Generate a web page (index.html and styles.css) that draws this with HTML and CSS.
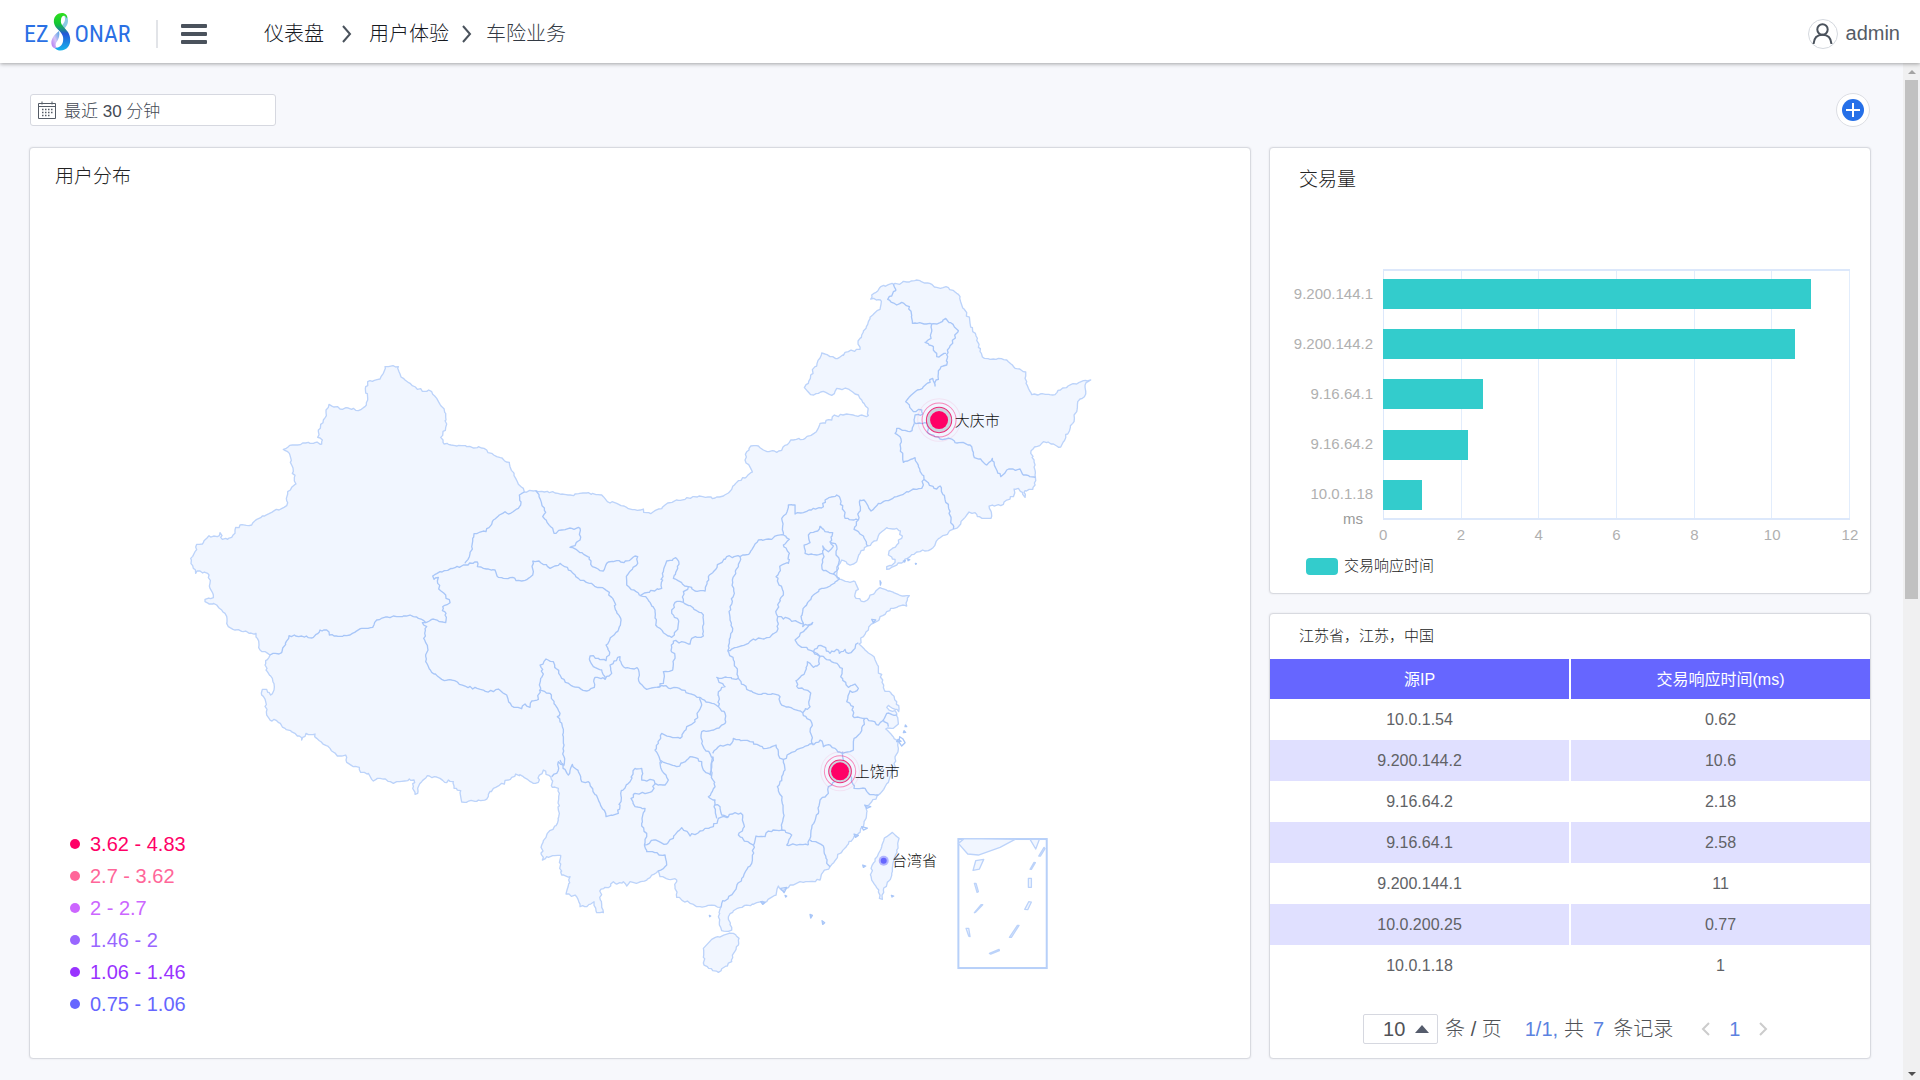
FILE: index.html
```html
<!DOCTYPE html>
<html lang="zh-CN">
<head>
<meta charset="utf-8">
<title>EZSonar</title>
<link rel="stylesheet" href="styles.css">
</head>
<body>
<header class="topbar">
  <a class="logo" href="#" aria-label="EZSonar">
    <span>EZ</span>
    <svg class="logo-mark" viewBox="0 0 22 38" aria-hidden="true">
      <defs>
        <linearGradient id="lg1" x1="0" y1="0" x2="0" y2="1">
          <stop offset="0" stop-color="#2fe01c"/><stop offset=".3" stop-color="#12c436"/>
          <stop offset=".55" stop-color="#2458d8"/><stop offset="1" stop-color="#16b4ec"/>
        </linearGradient>
        <linearGradient id="lg2" x1="0" y1="1" x2="1" y2="0">
          <stop offset="0" stop-color="#b06cf0"/><stop offset=".5" stop-color="#d6c4f8"/><stop offset="1" stop-color="#4aa0e0"/>
        </linearGradient>
      </defs>
      <path d="M2 33C0 27 3 23 9 18C10 22 9 26 6 30C5 33 6 35 9 36C5 36 3 35 2 33Z" fill="url(#lg2)"/>
      <path d="M17 3C19 8 18 12 14 16L11 13C15 10 16 6 14 2Z" fill="#8ccbe4"/>
      <path d="M17 6C18 2 15 0 12 0C7 0 3 4 4 10C5 16 12 18 13 24C14 30 11 35 5 35C8 39 15 38 18 34C21 30 21 24 18 19C15 15 10 12 11 7C11 4 13 2 15 3C16 4 17 5 17 6Z" fill="url(#lg1)"/>
    </svg>
    <span>ONAR</span>
  </a>
  <span class="divider"></span>
  <button class="menu" type="button" aria-label="菜单"><span></span><span></span><span></span></button>
  <nav class="crumbs">
    <a href="#">仪表盘</a>
    <svg viewBox="0 0 10 18" aria-hidden="true"><path d="M1 1l7 8-7 8"/></svg>
    <a href="#">用户体验</a>
    <svg viewBox="0 0 10 18" aria-hidden="true"><path d="M1 1l7 8-7 8"/></svg>
    <span>车险业务</span>
  </nav>
  <button class="user" type="button">
    <svg viewBox="0 0 30 30" aria-hidden="true"><circle cx="15" cy="15" r="14.5" fill="#fff" stroke="#d4d8de"/><g fill="none" stroke="#4a525c" stroke-width="2"><circle cx="14.500" cy="10.500" r="5.200"/><path d="M5.500 25C6 19 9.500 15.800 14.500 15.800S23 19 23.500 25"/></g></svg>
    <span>admin</span>
  </button>
</header>
<div class="view">
  <main class="content">
    <div class="toolbar">
      <label class="range">
        <svg viewBox="0 0 18 18" aria-hidden="true"><g fill="none" stroke="#555c66"><path d="M.5 2.500h17v15H.500zM.5 5.500h17M4 .500v3M14 .500v3"/><path d="M4 8.500h11M4 11.500h11M4 14.500h8" stroke-width="1.500" stroke-dasharray="1.500 1.500"/></g></svg>
        <input type="text" value="最近 30 分钟" aria-label="时间范围">
      </label>
      <button class="add" type="button" aria-label="添加"><svg viewBox="0 0 22 22" aria-hidden="true"><circle cx="11" cy="11" r="11" fill="#2670e8"/><path d="M11 4v14M4 11h14" stroke="#fff" stroke-width="2"/></svg></button>
    </div>
    <div class="board">
      <section class="card map-card">
        <svg class="map" id="map" viewBox="-450 -366 3660 2730" role="img" aria-label="用户分布"></svg>
        <h2>用户分布</h2>
        <ul class="ranges">
          <li class="c1">3.62 - 4.83</li>
          <li class="c2">2.7 - 3.62</li>
          <li class="c3">2 - 2.7</li>
          <li class="c4">1.46 - 2</li>
          <li class="c5">1.06 - 1.46</li>
          <li class="c6">0.75 - 1.06</li>
        </ul>
      </section>
      <div class="side">
        <section class="card chart-card">
          <h2>交易量</h2>
          <div class="chart">
            <ul class="names"><li>9.200.144.1</li><li>9.200.144.2</li><li>9.16.64.1</li><li>9.16.64.2</li><li>10.0.1.18</li></ul>
            <div class="plot">
              <div class="grid"><i></i><i></i><i></i><i></i><i></i><i></i></div>
              <div class="bars">
                <div class="row"><b style="width:91.700%"></b></div>
                <div class="row"><b style="width:88.300%"></b></div>
                <div class="row"><b style="width:21.500%"></b></div>
                <div class="row"><b style="width:18.200%"></b></div>
                <div class="row"><b style="width:8.300%"></b></div>
              </div>
            </div>
            <span class="unit">ms</span>
            <ul class="ticks"><li>0</li><li>2</li><li>4</li><li>6</li><li>8</li><li>10</li><li>12</li></ul>
          </div>
          <p class="key"><i></i>交易响应时间</p>
        </section>
        <section class="card table-card">
          <h3>江苏省，江苏，中国</h3>
          <table>
            <thead><tr><th>源IP</th><th>交易响应时间(ms)</th></tr></thead>
            <tbody>
              <tr><td>10.0.1.54</td><td>0.62</td></tr>
              <tr><td>9.200.144.2</td><td>10.6</td></tr>
              <tr><td>9.16.64.2</td><td>2.18</td></tr>
              <tr><td>9.16.64.1</td><td>2.58</td></tr>
              <tr><td>9.200.144.1</td><td>11</td></tr>
              <tr><td>10.0.200.25</td><td>0.77</td></tr>
              <tr><td>10.0.1.18</td><td>1</td></tr>
            </tbody>
          </table>
          <div class="pager">
            <label class="size"><select aria-label="每页条数"><option>10</option></select><svg viewBox="0 0 14 8" aria-hidden="true"><path d="M0 8L7 0l7 8z" fill="#555c6c"/></svg></label>
            <span class="per">条 / 页</span>
            <span class="num">1/1,</span><span class="total">共</span><span class="num count">7</span><span>条记录</span>
            <button class="prev" type="button" aria-label="上一页"><svg viewBox="0 0 9 14" aria-hidden="true"><path d="M8 1L2 7l6 6"/></svg></button>
            <a class="num" href="#">1</a>
            <button class="next" type="button" aria-label="下一页"><svg viewBox="0 0 9 14" aria-hidden="true"><path d="M1 1l6 6-6 6"/></svg></button>
          </div>
        </section>
      </div>
    </div>
  </main>
  <div class="scroll" aria-hidden="true">
    <svg viewBox="0 0 8 4"><path d="M0 4L4 0l4 4z" fill="#a3a3a3"/></svg>
    <div class="thumb"></div>
    <svg class="down" viewBox="0 0 8 4"><path d="M0 0l4 4 4-4z" fill="#505050"/></svg>
  </div>
</div>
<script src="map.js"></script>
</body>
</html>
```
FILE: styles.css
```css
* { box-sizing: border-box; }
body { margin: 0; min-height: 100vh; display: flex; flex-direction: column; background: #f7f8fc; color: #222; font-family: "Liberation Sans", "Noto Sans CJK SC", sans-serif; font-size: 20px; }
h2, h3, ul, p { margin: 0; padding: 0; font-weight: 300; list-style: none; }
button { border: 0; background: none; padding: 0; font: inherit; color: inherit; }
a { color: inherit; text-decoration: none; }
svg { display: block; }

.topbar { position: relative; z-index: 1; display: flex; align-items: center; height: 63px; padding: 4px 20px 0 24px; background: #fff; box-shadow: 0 1px 4px rgba(0, 0, 0, .35); }
.logo { display: flex; align-items: center; gap: 2px; width: 109px; color: #2a70e4; font-family: "Roboto Condensed", Roboto, sans-serif; font-size: 24px; }
.logo-mark { width: 22px; height: 38px; flex: none; margin-top: -4px; }
.divider { width: 2px; height: 28px; margin-left: 23px; background: #e2e4e8; }
.menu { display: grid; gap: 4px; width: 26px; margin-left: 23px; }
.menu span { height: 4px; border-radius: 1px; background: #4a525c; }
.crumbs { display: flex; align-items: center; margin-left: 57px; color: #16191f; font-weight: 300; line-height: 28px; }
.crumbs svg { width: 10px; height: 18px; margin: 0 17px 0 18px; fill: none; stroke: #4a525c; stroke-width: 2; }
.crumbs svg:last-of-type { margin: 0 14px 0 13px; }
.crumbs span { color: #333a44; }
.user { display: flex; align-items: center; gap: 8px; margin-left: auto; color: #555c66; }
.user svg { width: 30px; height: 30px; }

.view { flex: 1; display: flex; }
.content { flex: 1; min-width: 0; padding: 30px 32px 21px 29px; }
.toolbar { display: flex; align-items: center; justify-content: space-between; margin-bottom: 20px; padding: 0 1px; }
.range { display: flex; align-items: center; width: 246px; height: 32px; padding: 0 7px; gap: 8px; border: 1px solid #d6d8e0; border-radius: 3px; background: #fff; }
.range svg { width: 18px; height: 18px; flex: none; }
.range input { min-width: 0; width: 100%; height: 28px; padding: 0 0 2px; border: 0; background: none; color: #444a54; font-family: inherit; font-size: 17px; font-weight: 300; }
.add { display: grid; place-items: center; width: 34px; height: 34px; border: 1px solid #dcdee4; border-radius: 50%; background: #fff; }
.add svg { width: 22px; height: 22px; }

.board { display: grid; grid-template-columns: minmax(0, 67fr) minmax(0, 33fr); gap: 18px; }
.card { border: 1px solid #d8dae0; border-radius: 4px; background: #fff; box-shadow: 0 0 2px rgba(0, 0, 0, .1); }
.card h2 { font-size: 19px; line-height: 28px; }
.map-card { display: grid; }
.map-card > * { grid-area: 1 / 1; }
.map-card h2 { align-self: start; padding: 15px 25px; }
.map { width: 100%; height: auto; }
.land { fill: #f1f6ff; stroke: #bcd3fa; stroke-width: 4; stroke-linejoin: round; }
.border { fill: none; stroke: #a8c6f8; stroke-width: 4; stroke-linejoin: round; }
.frame { fill: none; stroke: #b7d0f9; stroke-width: 6; }
.place { fill: #111; font-size: 45px; font-weight: 300; }
.ranges { align-self: end; justify-self: start; padding: 0 40px 38px; line-height: 32px; }
.ranges li { display: flex; align-items: center; gap: 10px; }
.ranges li::before { content: ""; width: 10px; height: 10px; border-radius: 50%; background: currentColor; }
.c1 { color: #ff0066; } .c2 { color: #ff6699; } .c3 { color: #cc66ff; }
.c4 { color: #9966ff; } .c5 { color: #9933ff; } .c6 { color: #6666ff; }

.side { display: flex; flex-direction: column; gap: 19px; }
.chart-card { height: 447px; }
.chart-card h2 { padding: 18px 29px 0; }
.chart { display: grid; grid-template-columns: 113px minmax(0, 1fr); margin: 75px 20px 0 0; color: #b0b0b0; font-size: 15px; }
.names { padding-right: 10px; text-align: right; line-height: 50px; }
.plot { display: grid; height: 251px; }
.plot > * { grid-area: 1 / 1; }
.grid { display: grid; grid-template-columns: repeat(6, 1fr); border: solid #dce8fb; border-width: 2px 0 2px 1px; }
.grid i { border-right: 1px solid #e2edfc; }
.bars { display: grid; grid-template-rows: repeat(5, 1fr); align-items: center; }
.row b { display: block; height: 30px; background: #33cccc; }
.unit { margin-top: -10px; padding-right: 20px; text-align: right; line-height: 18px; color: #999; }
.ticks { display: flex; justify-content: space-between; padding-top: 5px; line-height: 20px; }
.ticks li { display: flex; justify-content: center; width: 0; }
.key { display: flex; align-items: center; gap: 6px; margin-top: 9px; padding-left: 36px; font-size: 15px; line-height: 24px; }
.key i { width: 32px; height: 17px; border-radius: 4px; background: #33cccc; }

.table-card { flex: 1; }
.table-card h3 { padding: 0 29px 1px; font-size: 15px; line-height: 44px; }
table { width: 100%; table-layout: fixed; border-collapse: collapse; font-size: 16px; text-align: center; }
th { height: 40px; padding: 0 0 3px; background: #6666ff; color: #fff; font-weight: 400; }
td { height: 41px; padding: 0; color: #606266; }
th + th, td + td { border-left: 2px solid #fff; }
tbody tr:nth-child(even) { background: #e0e0ff; }
.pager { display: flex; align-items: center; padding: 28px 0 0 93px; color: #505256; font-weight: 300; line-height: 30px; white-space: nowrap; }
.size { display: flex; align-items: center; width: 75px; height: 30px; padding: 0 8px 0 19px; border: 1px solid #d6d8e0; border-radius: 2px; }
.size select { flex: 1; min-width: 0; padding: 0; border: 0; background: none; appearance: none; color: inherit; font-family: inherit; font-size: 20px; }
.size svg { width: 14px; height: 8px; }
.per { margin: 0 23px 0 7px; }
.total { margin-left: 6px; }
.num { color: #5b82e0; }
.count { margin: 0 9px; }
.pager button { width: 9px; }
.pager button svg { width: 9px; height: 14px; fill: none; stroke: #ccc; stroke-width: 2; }
.prev { margin: 0 19px 0 28px; }
.next { margin-left: 19px; }

.scroll { display: flex; flex-direction: column; align-items: center; width: 17px; padding: 7px 0 4px; background: #f0f0f1; }
.scroll svg { width: 8px; height: 4px; }
.scroll .down { margin-top: auto; }
.thumb { width: 13px; height: 519px; margin-top: 6px; background: #c1c1c1; }
```
FILE: map.js
```js
// Map data: every part is [x origin, y origin, points]. Three units make one CSS pixel.
const A = [0, 240], B = [210, 990], C = [960, 510], D = [960, 1290], E = [1680, 0], F = [1680, 750], G = [1860, 1410];

const outline = [
  [C, "73,155 107,152 165,159 210,165 265,158 310,170 322,185 350,190 385,206 412,211 430,207 431,217 452,221 475,207 520,185 560,173 592,171 645,174 685,159 715,122 735,114 757,96 735,60 740,35 752,18 775,18 790,30 830,37 862,14 872,0"],
  [E, "190,508 222,490 240,460 275,450 277,440 320,432 345,437 385,436 384,415 365,390 345,372 325,357 290,355 275,376 250,364 212,374 193,353 205,340 212,315 245,249 270,260 292,266 325,245 360,238 354,222 365,195 385,155 398,135 420,118 421,90 392,87 395,75 422,50 445,44 460,43 500,36 540,32 575,43 590,52 625,53 645,66 660,80 665,105 680,128 690,160 698,185 712,205 720,245 733,265 775,265 805,275 825,295 857,306 855,325 865,355 875,374 900,372 945,374 968,354 1010,342 1030,332 1052,330 1035,345 1037,372 1013,395 1003,445 965,525 962,531 910,515 873,542 885,585 886,622 878,658 855,662 855,682 835,655 822,657 820,680 800,690 782,707 747,708 755,738 745,745 712,740 705,728 687,726 680,735 655,770 640,777 615,795 590,812 572,838 540,845 510,860 470,885 440,898 440,890 462,880 465,868 445,855 447,843 470,825 487,798 470,775 440,773 425,785 410,812 382,828 360,850 350,875 330,885 305,870 300,880"],
  [F, "290,150 290,162 298,178 330,187 345,185 355,208 345,222 348,235 370,245 382,240 390,225 405,217 420,203 450,213 478,225 508,227 502,240 500,258 488,255 470,262 440,275 420,290 417,300 398,310 385,330 370,350 357,372 375,390 402,410 415,450 428,480 432,508 452,518 470,545 476,575 445,556 440,562 470,580 475,612 460,625 437,627 455,645 470,660 475,685 465,715 465,745 450,770 435,800 415,825"],
  [D, "1115,305 1098,325 1098,355 1090,380 1075,400 1060,415 1045,432 1020,460 990,500 970,515 960,540 925,545 900,545 870,555 850,572 835,558 828,585 800,605 770,608 740,615 700,632 685,650 695,690 685,694 665,692 655,650 662,622 635,615 600,620 570,610 530,592 525,560 530,540 480,530 474,513 455,525 440,540 415,548 390,545 380,558 370,545 350,552 340,545 325,563 303,567 301,600 310,638 290,638 282,605 260,620 240,620 230,590 198,582 210,530 185,525 180,480 182,466 140,470 127,480 125,435 140,405 172,370 178,340 175,265 157,262 152,230"],
  [B, "880,510 868,525 865,547 850,550 820,530 797,522 775,540 730,565 710,597 680,604 635,606 632,572 612,565 610,545 595,540 590,548 570,535 532,527 515,545 505,560 503,580 495,583 490,560 492,540 478,537 430,550 400,537 390,535 370,543 355,520 332,517 328,502 310,500 290,487 287,465 262,468 240,445 200,415 195,402 168,400 155,420 148,408 105,385 80,362 60,360 50,345 47,305 35,285 37,268 50,268 62,285 72,270 67,235 48,210 47,182 60,165"],
  [A, "240,900 228,850 190,845 145,830 135,790 110,765 75,755 75,748 100,743 90,715 87,675 60,663 47,670 40,655 32,625 45,605 50,583 70,578 87,557 112,560 120,548 127,568 155,562 165,540 180,525 215,525 232,507 275,487 320,467 323,425 335,412 348,402 335,345 328,310 310,298 325,290 385,277 405,278 425,282 427,270 413,262 415,240 430,210 447,163 480,177 520,175 535,182 555,170 563,150 557,110 570,92 600,87 610,70 615,50 655,50 657,65 670,85 690,100 712,118 755,125 770,145 797,190 797,232 782,262 792,282 830,288 905,294 950,320 988,337 990,350 1012,395 1030,415 1033,426"]
];

const islands = [
  [D, "635,718 665,708 700,700 717,715 715,735 697,765 695,785 655,817 612,795 610,745"],
  [G, "277,277 297,295 290,330 275,400 250,450 247,478 238,475 236,450 215,420 213,385 245,320 260,290"]
];

const borders = [
  [A, "1033,426 1018,435 1022,465 1015,475 985,492 975,485 940,510 918,545 882,551 875,590 868,620 855,640"],
  [A, "738,818 755,808 797,818 798,790 787,782 788,770 810,758 797,735 776,717 775,682 762,688 758,678 780,665 855,645 892,636 892,650 925,657 945,660 955,682 990,683 1025,693 1045,685 1060,665 1058,632"],
  [A, "738,818 715,805 690,795 640,798 590,810 578,832 545,835 500,857 448,855 440,840 420,840 400,862 385,863 365,858 327,857 305,908 270,915"],
  [B, "528,68 517,68 530,80 521,115 533,145 527,185 545,217 575,238 605,240 645,258 700,270 730,275 745,267 770,285 785,318 800,322 815,326 825,312 840,322 845,303 865,298 868,270"],
  [B, "868,270 900,280 930,340 922,350 937,380 942,470 942,495 925,485 920,520 905,530"],
  [C, "98,363 122,368 150,385 180,370 205,390 235,415 270,430 320,452 343,485 350,515 363,540 355,570 335,590 318,615 328,645 318,662 270,648 268,657 280,680 305,690 315,718"],
  [C, "107,152 137,217 128,230 158,265 162,280 185,270 215,265 240,265 240,300 210,322 240,338 268,352 272,373 310,393 320,370 350,362 372,368 405,348 413,350 413,370 382,405 380,435 418,466"],
  [C, "418,466 485,445 487,400 500,363 527,353 537,372 520,415 565,440 550,455 550,487 525,487 515,520 535,540 533,568 515,592 490,578 467,555 465,510 437,470 418,466"],
  [C, "550,487 590,512 610,525 610,588 575,595 570,612 520,603 513,632 525,650 518,690 490,695 490,730 470,742"],
  [C, "565,440 585,453 615,453 625,410 660,370 680,350 720,350"],
  [C, "720,350 715,380 697,420 703,460 690,500 690,540 697,575 683,632"],
  [C, "720,350 750,338 775,300 805,297 850,285"],
  [C, "850,285 868,298 850,315 868,340 865,370 845,375 828,410 850,455 827,515 833,530"],
  [C, "833,530 830,575 800,593 760,597 745,610 690,632 683,632"],
  [C, "850,285 845,235 858,222 865,195 885,195 885,222 910,218 940,205 970,200 975,180 1010,165 1020,175 1035,235 1075,240"],
  [C, "1075,240 1062,268 1090,288 1102,318"],
  [C, "960,258 975,275 998,278 990,305 1000,318 985,335 968,318 968,340 950,345 915,340 912,315 930,308 925,285 945,275 960,258"],
  [C, "990,305 1010,318 1008,345 1018,360 1015,385 1000,402 970,392 965,375 972,350 968,340"],
  [C, "1000,402 1018,415 990,438 965,445 935,470 908,515 905,540 910,550"],
  [C, "833,530 870,538 910,550 908,560 938,547 885,600 895,615 940,635"],
  [C, "940,635 955,617 970,620 990,640 1010,628 1018,640 1035,628 1045,640 1060,630 1075,608"],
  [C, "940,635 960,650 958,672 940,682 922,665 915,695 888,722 895,745 928,755 930,800 908,818"],
  [C, "940,635 990,660 1027,685 1022,710 1045,742 1065,732 1075,745 1065,755 1050,752 1040,785 1060,800 1058,828 1095,835"],
  [C, "1095,835 1135,855 1160,820 1190,825"],
  [C, "1150,840 1165,860"],
  [C, "1095,835 1080,880 1060,905 1060,930 1028,940 1010,930 990,915 970,920 960,900 940,915"],
  [C, "683,632 700,660 712,695 715,715 740,748 775,763 835,765 845,795 895,812 908,818 935,848 930,875 940,915"],
  [C, "715,715 650,712 675,740 655,755 655,800"],
  [C, "600,772 655,800 675,820 675,850 650,865 605,875 605,910 640,955"],
  [C, "470,742 490,738 545,750 600,772"],
  [C, "470,742 440,748 420,730 415,688 370,680 360,650 330,675 335,700 315,718 285,712 283,742 260,753 220,740 185,715 160,665 138,657 120,675 130,702 118,735 120,752"],
  [C, "600,772 605,795 585,845 560,860 540,895 510,890 485,880 475,910 465,930 480,960 485,970"],
  [D, "480,180 500,190 530,200 560,180 570,170 605,185 610,210 632,225 638,170"],
  [D, "638,160 655,140 690,135 700,115 750,125 800,145 828,135 835,165 850,178 870,160 900,145 940,130"],
  [D, "850,178 855,210 832,260 845,300 850,340 845,390"],
  [D, "638,170 635,225 645,260 625,290 645,300 642,320 650,355"],
  [D, "480,185 485,210 505,240 495,255 465,250"],
  [D, "180,180 205,225 217,193 235,215 245,245 265,245 300,310 318,350 355,340 362,280 390,245 405,205 425,205 425,240 460,240 465,252 455,275 400,283 393,295 405,320 435,325 425,370 440,410 433,435"],
  [D, "433,435 460,420 500,432 545,383 570,408 600,393 640,380 655,355 685,350"],
  [D, "645,315 660,320 665,345 685,350 705,338 728,345 733,380 715,405 750,430 760,435"],
  [D, "760,435 755,490 725,535 700,578 665,610 662,622"],
  [D, "433,435 440,455 495,465 500,495 474,513"],
  [D, "760,435 768,408 795,410 805,393 845,390 875,405 860,435 890,435 925,435"],
  [D, "925,435 935,385 955,340 960,300 980,285 985,260 1020,235"],
  [D, "930,420 970,438 980,490 990,500"],
  [D, "1028,155 1030,185 1050,210 1055,235 1062,265 1095,265 1105,280 1135,285"],
  [E, "355,750 360,690 372,690 393,723 415,700 470,680 500,665 545,655 552,628"],
  [E, "460,43 467,62 443,88 470,105 485,97 508,110 517,160 575,162 600,158 617,145 655,182 622,240 620,285 603,290 585,348 578,325 550,350 520,370 497,395 520,425 545,420 548,432 525,435 523,458 562,460 565,490 600,507 635,507 645,518 675,520 695,530 700,555 740,585 757,565 782,620 800,600 840,597 850,615 886,622"],
  [E, "575,162 573,205 555,217 580,230 590,260 618,250"],
  [E, "523,460 510,485 470,475 465,490 480,500 482,535 490,577 525,563 535,590 552,628 590,657 600,648 625,710 640,777"]
];

// Small islets off the coast, and the pieces inside the South China Sea inset.
const islets = [
  [D, "1199,110 1208,116 1215,128 1205,138 1197,126"], [D, "1212,92 1217,97 1210,98"], [D, "1194,118 1203,124 1190,125"],
  [D, "1216,75 1220,80 1215,80"], [D, "1094,315 1112,320 1100,325"], [D, "1085,380 1102,384 1090,390"], [D, "1062,402 1075,406 1066,412"],
  [D, "1088,495 1097,498 1090,502"], [D, "1174,586 1181,588 1176,591"], [D, "930,643 937,646 932,654"], [D, "966,662 974,668 968,673"],
  [D, "842,565 860,562 852,578"], [D, "782,605 795,607 788,613"], [D, "628,646 632,648 629,650"], [D, "855,586 860,588 857,591"],
  [E, "490,873 496,871 494,876"], [E, "503,867 509,869 504,872"], [E, "526,880 529,881 527,883"], [E, "420,932 423,938 421,945"], [F, "395,298 407,300 400,308"]
];
const inset = [
  "475,310 492,296 645,298 600,322 535,345 503,342", "690,298 718,298 707,327", "527,362 551,358 538,387 519,391",
  "523,430 528,430 535,455 531,457", "523,518 543,494 548,494 527,516", "498,565 506,565 510,590 506,588", "568,640 597,628 598,632 572,642",
  "628,592 652,556 657,556 634,592", "674,508 686,485 694,486 683,509", "685,415 694,415 694,442 685,442", "690,388 702,367 706,368 694,388", "716,348 732,322 735,326 721,348"
];

const svg = document.getElementById("map");
const NS = "http://www.w3.org/2000/svg";
function add(name, attrs, text) {
  const el = document.createElementNS(NS, name);
  for (const key in attrs) el.setAttribute(key, attrs[key]);
  if (text) el.textContent = text;
  svg.appendChild(el);
}
function points([origin, text]) {
  return text.split(" ").map(p => { const [x, y] = p.split(","); return [+x + origin[0], +y + origin[1]]; });
}
// Breaks long straight runs into short uneven steps, as surveyed borders have.
let seed = 7;
function random() { seed = (seed * 16807) % 2147483647; return seed / 2147483647 - .5; }
function path(list, closed) {
  let d = "M" + list[0].join(" ");
  for (let i = 1; i < list.length; i++) {
    const [x0, y0] = list[i - 1], [x1, y1] = list[i];
    const steps = Math.max(1, Math.round(Math.hypot(x1 - x0, y1 - y0) / 8));
    for (let s = 1; s < steps; s++) {
      d += "L" + Math.round(x0 + (x1 - x0) * s / steps + random() * 7) + " " + Math.round(y0 + (y1 - y0) * s / steps + random() * 7);
    }
    d += "L" + x1 + " " + y1;
  }
  return d + (closed ? "Z" : "");
}
add("path", { class: "land", d: path(outline.flatMap(points), true) });
islands.forEach(p => add("path", { class: "land", d: path(points(p), true) }));
borders.forEach(p => add("path", { class: "border", d: path(points(p), false) }));
islets.forEach(p => add("path", { class: "border", d: "M" + points(p).join("L") + "Z" }));
add("rect", { class: "frame", x: 2335, y: 1707, width: 265, height: 387 });
inset.forEach(t => add("path", { class: "land", d: "M" + points([G, t]).join("L") + "Z" }));

function pulse(x, y, inner, middle, outer) {
  add("circle", { cx: x, cy: y, r: outer, fill: "none", stroke: "#ff0066", "stroke-width": 3, opacity: .08 });
  add("circle", { cx: x, cy: y, r: middle, fill: "none", stroke: "#ff0066", "stroke-width": 3, opacity: .45 });
  add("circle", { cx: x, cy: y, r: inner, fill: "#ccd3dd", stroke: "#ee2a78", "stroke-width": 3 });
  add("circle", { cx: x, cy: y, r: 27, fill: "#ff0066" });
}
pulse(2277, 450, 38, 51, 64);
pulse(1980, 1504, 34, 47, 58);
add("circle", { cx: 2111, cy: 1772, r: 15, fill: "#6666ff", opacity: .45 });
add("circle", { cx: 2111, cy: 1772, r: 9, fill: "#6666ff" });
add("text", { class: "place", x: 2324, y: 467 }, "大庆市");
add("text", { class: "place", x: 2024, y: 1522 }, "上饶市");
add("text", { class: "place", x: 2136, y: 1788 }, "台湾省");
```
